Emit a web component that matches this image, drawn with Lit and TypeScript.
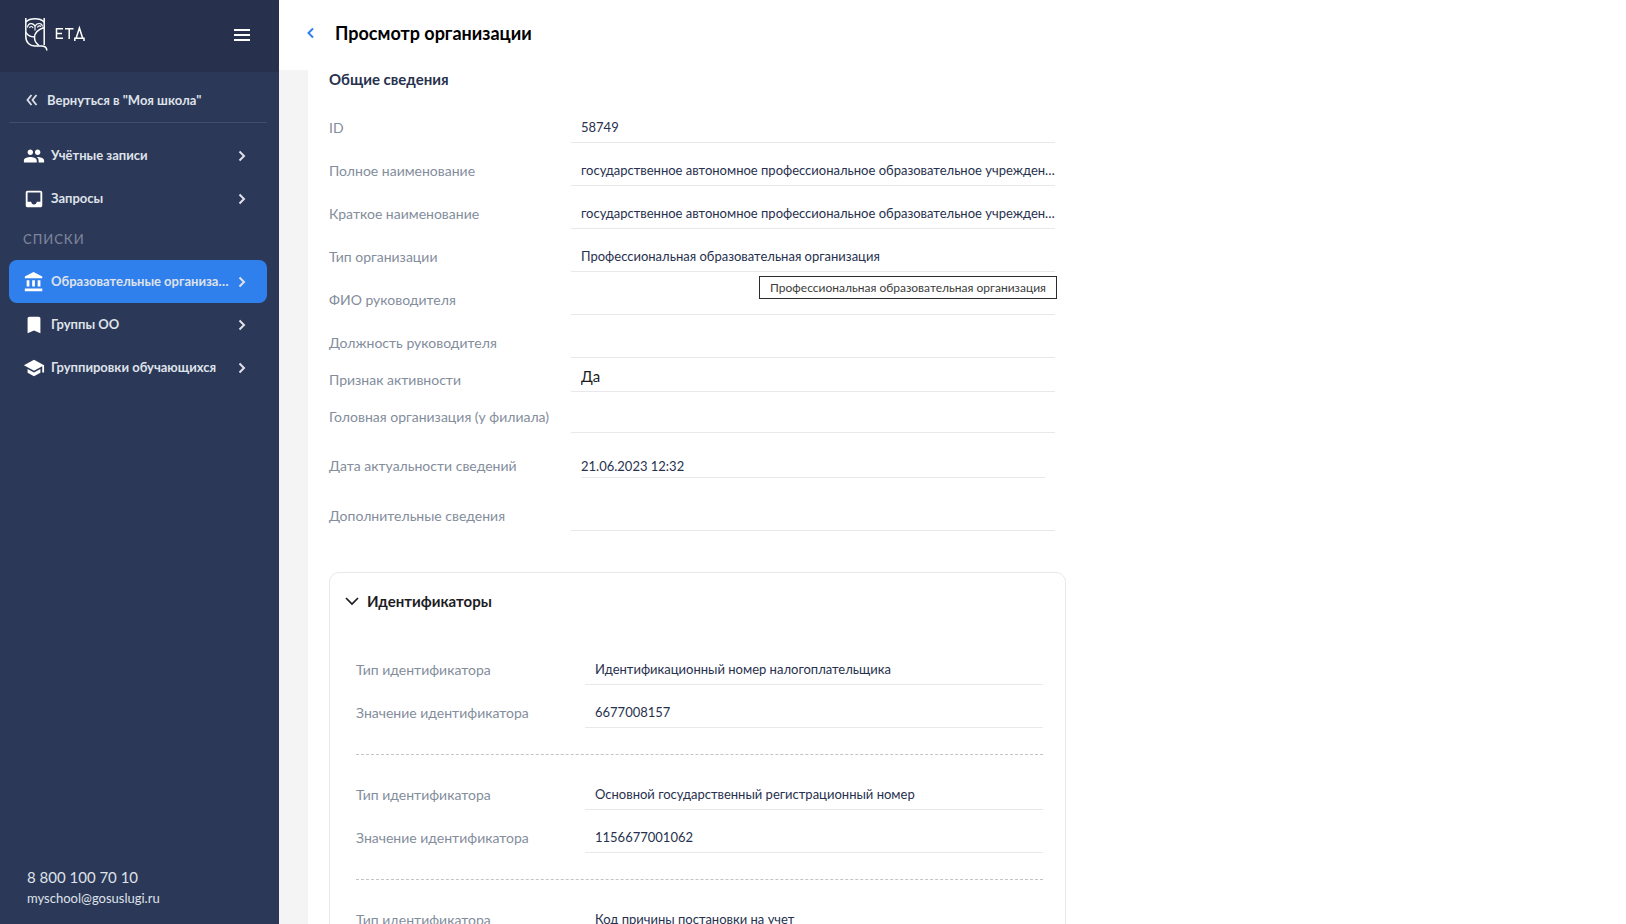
import { LitElement, html, css, svg, nothing } from "lit";
import { customElement, property, state } from "lit/decorators.js";
import { classMap } from "lit/directives/class-map.js";

type Field = { id: string; label: string; value: string; kind?: string };

const FULL_NAME =
  "государственное автономное профессиональное образовательное учреждение Свердловской области";

const GENERAL: Field[] = [
  { id: "org-id", label: "ID", value: "58749" },
  { id: "full-name", label: "Полное наименование", value: FULL_NAME },
  { id: "short-name", label: "Краткое наименование", value: FULL_NAME },
  { id: "org-type", label: "Тип организации", value: "Профессиональная образовательная организация" },
  { id: "head-name", label: "ФИО руководителя", value: "" },
  { id: "head-post", label: "Должность руководителя", value: "" },
  { id: "active", label: "Признак активности", value: "Да", kind: "flag" },
  { id: "parent", label: "Головная организация (у филиала)", value: "", kind: "parent" },
  { id: "updated", label: "Дата актуальности сведений", value: "21.06.2023 12:32", kind: "date" },
  { id: "extra", label: "Дополнительные сведения", value: "", kind: "extra" },
];

const IDENTIFIERS = [
  { type: "Идентификационный номер налогоплательщика", value: "6677008157" },
  { type: "Основной государственный регистрационный номер", value: "1156677001062" },
  { type: "Код причины постановки на учет", value: "667701001" },
];

const ICONS = {
  people: svg`<path d="M16 11c1.66 0 2.99-1.34 2.99-3S17.66 5 16 5s-3 1.340-3 3 1.340 3 3 3zm-8 0c1.660 0 2.990-1.340 2.990-3S9.660 5 8 5 5 6.340 5 8s1.340 3 3 3zm0 2c-2.330 0-7 1.170-7 3.500V19h14v-2.500C15 14.170 10.330 13 8 13zm8 0c-.29 0-.62.02-.97.05 1.160.84 1.970 1.970 1.970 3.450V19h6v-2.500c0-2.330-4.670-3.500-7-3.500z"/>`,
  inbox: svg`<path d="M19 3H5c-1.100 0-2 .9-2 2v14c0 1.100.9 2 2 2h14c1.100 0 2-.9 2-2V5c0-1.100-.9-2-2-2zm0 12h-4c0 1.660-1.350 3-3 3s-3-1.340-3-3H5V5h14v10z"/>`,
  bank: svg`<path d="M4 10v7h3v-7H4zm6 0v7h3v-7h-3zM2 22h19v-3H2v3zm14-12v7h3v-7h-3zM11.500 1L2 6v2h19V6l-9.500-5z"/>`,
  bookmark: svg`<path d="M17 3H7c-1.100 0-2 .9-2 2v16l7-3 7 3V5c0-1.100-.9-2-2-2z"/>`,
  school: svg`<path d="M5 13.180v4L12 21l7-3.820v-4L12 17l-7-3.820zM12 3L1 9l11 6 9-4.910V17h2V9L12 3z"/>`,
};

@customElement("app-sidebar")
export class AppSidebar extends LitElement {
  static styles = css`
    :host { display: flex; flex-direction: column; background: #2c3857; color: #dfe2ea; }
    .brand { display: flex; align-items: center; height: 72px; padding: 0 28px 2px 24px; background: #27314e; box-sizing: border-box; }
    .logo { display: block; width: 64px; height: 36px; }
    .burger { margin-left: auto; display: flex; padding: 0; border: 0; background: none; color: #fff; }
    .body { display: flex; flex-direction: column; flex: 1; padding: 8px 12px 16px 9px; }
    .back { display: flex; align-items: center; gap: 9px; height: 40px; padding: 0 17px 2px; border-bottom: 1px solid #414d6b; color: inherit; text-decoration: none; font-size: 13px; font-weight: 700; }
    .menu { display: flex; flex-direction: column; margin-top: 11px; }
    .item { display: flex; align-items: center; height: 43px; padding: 0 18px 0 14px; border-radius: 8px; color: inherit; text-decoration: none; font-size: 13px; font-weight: 700; }
    .item.active { background: #2f80ed; }
    .glyph { flex: none; width: 22px; height: 22px; fill: #fff; }
    .text { flex: 1; min-width: 0; margin-left: 6px; overflow: hidden; text-overflow: ellipsis; white-space: nowrap; line-height: 20px; padding-bottom: 1px; }
    .arrow { flex: none; width: 14px; height: 14px; margin-left: 6px; }
    .heading { margin: 0; padding: 0 14px; height: 40px; line-height: 38px; font-size: 13px; font-weight: 500; letter-spacing: 1px; color: #7b849b; }
    .contacts { display: flex; flex-direction: column; margin-top: auto; padding-left: 18px; color: #dfe2ea; }
    .contacts a { color: inherit; text-decoration: none; }
    .phone { font-size: 15px; line-height: 22px; }
    .mail { font-size: 13px; line-height: 20px; }
  `;

  private item(icon: keyof typeof ICONS, text: string, active = false) {
    return html`<a href="#" class=${classMap({ item: true, active })} aria-current=${active ? "page" : nothing}>
      <svg class="glyph" viewBox="0 0 24 24" aria-hidden="true">${ICONS[icon]}</svg>
      <span class="text">${text}</span>
      <svg class="arrow" viewBox="0 0 14 14" fill="none" stroke="currentColor" stroke-width="2" aria-hidden="true"><path d="M4.500 2.500 9 7l-4.500 4.500"/></svg>
    </a>`;
  }

  render() {
    return html`
      <div class="brand">
        <svg class="logo" viewBox="0 0 64 36" fill="none" stroke="#fff" aria-label="ЕТД" role="img">
          <path stroke-width="1.500" d="M1.800 1v18.500c0 6 4 9.500 9 9.500h6.500c3 0 5.500 1 5.500 4.500M20.200 1v27"/>
          <path stroke-width="1.500" d="M1.800 5C6 .8 16 .8 20.200 5M2 15.500C4 19 7.500 20 10.500 20M20 10.500C12.500 13 10.500 17 10.500 20.500c0 3.500 1.500 6 4.500 8"/>
          <path stroke-width="1.100" d="M3.500 10.500c.5-5 6-5 7.500-1 1.500-4 7-4 7.500 0M11 9.500v4M5.500 11c.5-2 3-2 3.500 0M13.500 10.500c.5-2 2.500-2 3.500-1"/>
          <path stroke-width="1.500" d="M39 11.700h-6.500v9.600H39M32.500 16.500H38M41 11.700h8.500M45.200 11.700v10.300M50.800 24v-2.700h9.200V24M52.200 21l3.200-10 3.200 10"/>
        </svg>
        <button class="burger" type="button" aria-label="Меню">
          <svg width="18" height="14" viewBox="0 0 18 14" fill="currentColor" aria-hidden="true"><path d="M1 1h16v2H1zM1 6h16v2H1zM1 11h16v2H1z"/></svg>
        </button>
      </div>
      <div class="body">
        <a class="back" href="#">
          <svg width="12" height="12" viewBox="0 0 12 12" fill="none" stroke="currentColor" stroke-width="1.800" aria-hidden="true"><path d="M5.500 1 1.500 6l4 5M10.500 1l-4 5 4 5"/></svg>
          <span>Вернуться в "Моя школа"</span>
        </a>
        <nav class="menu">
          ${this.item("people", "Учётные записи")}
          ${this.item("inbox", "Запросы")}
          <h2 class="heading">СПИСКИ</h2>
          ${this.item("bank", "Образовательные организации", true)}
          ${this.item("bookmark", "Группы ОО")}
          ${this.item("school", "Группировки обучающихся")}
        </nav>
        <div class="contacts">
          <a class="phone" href="tel:88001007010">8 800 100 70 10</a>
          <a class="mail" href="mailto:myschool@gosuslugi.ru">myschool@gosuslugi.ru</a>
        </div>
      </div>
    `;
  }
}

@customElement("app-field")
export class AppField extends LitElement {
  @property({ attribute: false }) field!: Field;

  static styles = css`
    :host { display: block; }
    .row { display: grid; grid-template-columns: var(--label-width) minmax(0, 1fr); height: 43px; align-items: end; }
    .label { align-self: end; padding-bottom: 5px; font-size: 14px; line-height: 20px; color: #838d9c; white-space: nowrap; }
    .input { box-sizing: border-box; width: 100%; height: 32px; padding: 0 0 0 10px; border: 0; border-bottom: 1px solid #e8e8ec; border-radius: 0; background: none; color: #27314e; font: inherit; font-size: 13px; outline: 0; text-overflow: ellipsis; }
    .flag { height: 34px; }
    .flag .label { padding-bottom: 2px; }
    .flag .input { height: 30px; padding-bottom: 1px; font-size: 15px; color: #1c1c1f; }
    .parent { height: 41px; }
    .parent .label { padding-bottom: 6px; }
    .date { height: 45px; }
    .date .label { padding-bottom: 2px; }
    .date .input { width: auto; height: 24px; margin: 0 10px; padding: 0; }
    .extra { height: 53px; }
  `;

  render() {
    const { id, label, value, kind } = this.field;
    return html`<div class="row ${kind ?? ""}">
      <label class="label" for=${id}>${label}</label>
      <input class="input" id=${id} type="text" readonly .value=${value} />
    </div>`;
  }
}

@customElement("app-root")
export class AppRoot extends LitElement {
  @state() private expanded = true;

  static styles = css`
    :host { display: grid; grid-template-columns: 279px minmax(0, 1fr); height: 100vh; overflow: hidden; background: #fff; font-family: Lato, "Open Sans", sans-serif; }
    .main { display: flex; flex-direction: column; min-width: 0; min-height: 0; }
    .top { display: flex; flex: none; align-items: center; gap: 19px; height: 70px; padding: 0 27px 4px; box-sizing: border-box; }
    .prev { display: flex; padding: 0; border: 0; background: none; color: #2f80ed; }
    .title { margin: 0; font-size: 18px; line-height: 24px; font-weight: 700; color: #000; }
    .scroll { flex: 1; min-height: 0; overflow: hidden; padding-left: 29px; background: #f4f4f4; }
    .sheet { min-height: 100%; box-sizing: border-box; padding: 0 21px; background: #fff; }
    .content { max-width: 737px; }
    .section { margin: 0; font-size: 15px; line-height: 18px; font-weight: 700; color: #27314e; }
    .fields { position: relative; margin-top: 12px; padding-right: 11px; --label-width: 242px; }
    .tip { position: absolute; right: 9px; top: 176px; padding: 0 10px; border: 1px solid #2b2b2b; background: #fff; color: #3c3c3c; font-size: 12px; line-height: 21px; white-space: nowrap; }
    .card { margin-top: 41px; border: 1px solid #e8e8ec; border-radius: 10px; }
    .toggle { display: flex; align-items: center; gap: 8px; height: 56px; padding: 0 15px; border: 0; background: none; font: inherit; font-size: 15px; font-weight: 700; color: #1c1c1f; }
    .groups { padding: 13px 22px 26px 26px; --label-width: 229px; }
    .group { padding-bottom: 26px; border-bottom: 1px dashed #c4c4c4; }
    .group + .group { padding-top: 12px; }
    .group:last-child { border-bottom: 0; }
  `;

  render() {
    return html`
      <app-sidebar></app-sidebar>
      <main class="main">
        <header class="top">
          <button class="prev" type="button" aria-label="Назад">
            <svg width="10" height="14" viewBox="0 0 10 14" fill="none" stroke="currentColor" stroke-width="2" aria-hidden="true"><path d="M7 2.500 2.500 7 7 11.500"/></svg>
          </button>
          <h1 class="title">Просмотр организации</h1>
        </header>
        <div class="scroll">
          <div class="sheet">
            <div class="content">
              <h2 class="section">Общие сведения</h2>
              <div class="fields">
                ${GENERAL.map((f) => html`<app-field .field=${f}></app-field>`)}
                <div class="tip" role="tooltip">Профессиональная образовательная организация</div>
              </div>
              <section class="card">
                <button class="toggle" type="button" aria-expanded=${this.expanded} @click=${() => (this.expanded = !this.expanded)}>
                  <svg width="14" height="10" viewBox="0 0 14 10" fill="none" stroke="currentColor" stroke-width="1.700" aria-hidden="true"><path d="M1 2l6 6 6-6"/></svg>
                  <span>Идентификаторы</span>
                </button>
                ${this.expanded
                  ? html`<div class="groups">
                      ${IDENTIFIERS.map(
                        (it, i) => html`<div class="group">
                          <app-field .field=${{ id: `type-${i}`, label: "Тип идентификатора", value: it.type }}></app-field>
                          <app-field .field=${{ id: `value-${i}`, label: "Значение идентификатора", value: it.value }}></app-field>
                        </div>`
                      )}
                    </div>`
                  : nothing}
              </section>
            </div>
          </div>
        </div>
      </main>
    `;
  }
}
